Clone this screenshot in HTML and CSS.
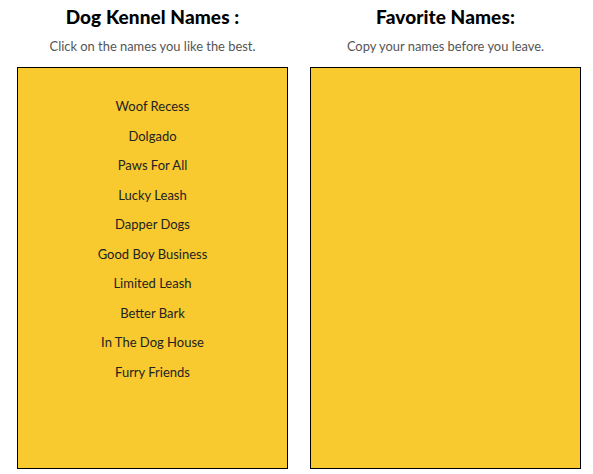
FILE: index.html
```html
<!DOCTYPE html>
<html>
<head>
<meta charset="utf-8">
<link rel="stylesheet" href="styles.css">
</head>
<body>
<div class="page">
  <section class="col">
    <h2 class="title">Dog Kennel Names :</h2>
    <p class="sub">Click on the names you like the best.</p>
    <div class="box">
      <ul class="names">
        <li>Woof Recess</li>
        <li>Dolgado</li>
        <li>Paws For All</li>
        <li>Lucky Leash</li>
        <li>Dapper Dogs</li>
        <li>Good Boy Business</li>
        <li>Limited Leash</li>
        <li>Better Bark</li>
        <li>In The Dog House</li>
        <li>Furry Friends</li>
      </ul>
    </div>
  </section>
  <section class="col">
    <h2 class="title">Favorite Names:</h2>
    <p class="sub">Copy your names before you leave.</p>
    <div class="box"></div>
  </section>
</div>
</body>
</html>
```
FILE: styles.css
```css
html, body {
  margin: 0;
  padding: 0;
  background: #fff;
}
body {
  font-family: "Lato", "Liberation Sans", sans-serif;
}
.page {
  display: flex;
  gap: 22px;
  padding-left: 17px;
  padding-top: 6px;
}
.col {
  width: 271px;
  display: flex;
  flex-direction: column;
  align-items: center;
}
.title {
  margin: 0;
  font-size: 19px;
  font-weight: 900;
  line-height: 22px;
  color: #000;
  letter-spacing: 0.1px;
}
.sub {
  margin: 8px 0 0;
  font-size: 12.9px;
  line-height: 20px;
  color: #555;
}
.box {
  box-sizing: border-box;
  width: 271px;
  height: 402px;
  margin-top: 11px;
  background: #f8ca2f;
  border: 1px solid #000;
}
.names {
  list-style: none;
  margin: 0;
  padding: 24px 0 0;
  text-align: center;
}
.names li {
  font-size: 13px;
  line-height: 29.5px;
  color: #222;
}
```
